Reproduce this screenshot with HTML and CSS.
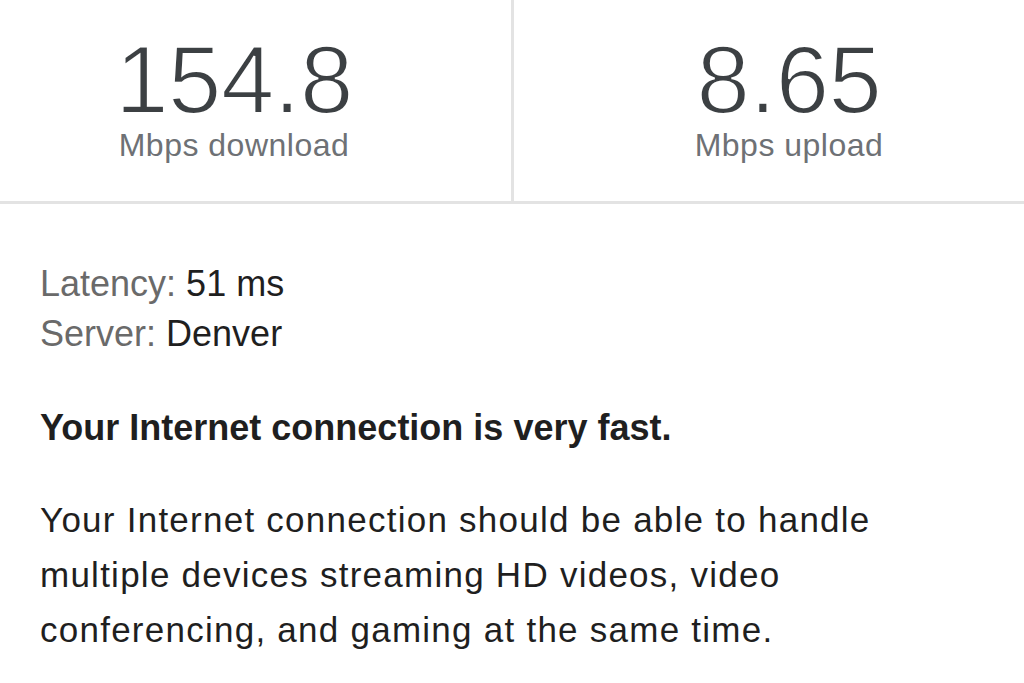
FILE: index.html
```html
<!DOCTYPE html>
<html>
<head>
<meta charset="utf-8">
<link rel="stylesheet" href="styles.css">
</head>
<body>
<div class="page">
  <section class="speeds">
    <div class="speed speed-down">
      <div class="value">154.8</div>
      <div class="unit">Mbps download</div>
    </div>
    <div class="speed speed-up">
      <div class="value">8.65</div>
      <div class="unit">Mbps upload</div>
    </div>
  </section>
  <section class="details">
    <div class="meta">
      <div class="meta-row"><span class="meta-label">Latency:</span> <span class="meta-value">51 ms</span></div>
      <div class="meta-row"><span class="meta-label">Server:</span> <span class="meta-value">Denver</span></div>
    </div>
    <p class="verdict">Your Internet connection is very fast.</p>
    <p class="desc">Your Internet connection should be able to handle multiple devices streaming HD videos, video conferencing, and gaming at the same time.</p>
  </section>
</div>
</body>
</html>
```
FILE: styles.css
```css
html, body {
  margin: 0;
  padding: 0;
  background: #ffffff;
}
body {
  font-family: "Liberation Sans", Arial, sans-serif;
  width: 1024px;
  height: 683px;
  overflow: hidden;
}
.speeds {
  display: grid;
  grid-template-columns: 514px 1fr;
  height: 201px;
  border-bottom: 3px solid #e3e3e3;
}
.speed {
  display: flex;
  flex-direction: column;
  align-items: center;
  padding-top: 34px;
}
.speed-down {
  border-right: 3px solid #e3e3e3;
  padding-right: 43px;
}
.speed-up {
  padding-left: 40px;
}
.value {
  font-size: 96px;
  line-height: 92px;
  color: #3c4043;
  letter-spacing: -0.5px;
  -webkit-text-stroke: 2px #ffffff;
}
.unit {
  font-size: 32px;
  line-height: 38px;
  letter-spacing: 0.5px;
  color: #6e7175;
}
.details {
  padding: 55px 40px 0 40px;
}
.meta-row {
  font-size: 36px;
  line-height: 50px;
}
.meta-label {
  color: #6a6a6a;
}
.meta-value {
  color: #1f1f1f;
}
.verdict {
  margin: 44px 0 0 0;
  font-size: 36px;
  line-height: 50px;
  font-weight: bold;
  color: #1f1f1f;
}
.desc {
  margin: 39px 0 0 0;
  font-size: 35px;
  line-height: 55px;
  letter-spacing: 1.25px;
  color: #1f1f1f;
  max-width: 900px;
}
```
